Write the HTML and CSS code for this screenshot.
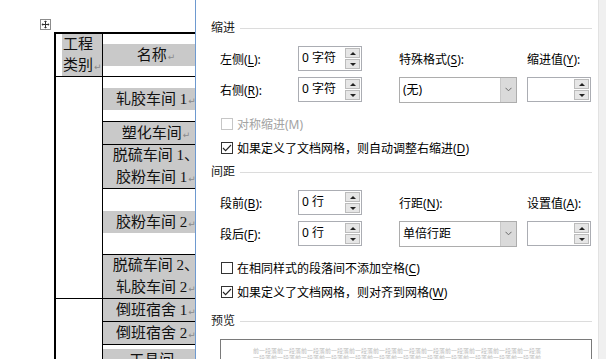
FILE: index.html
```html
<!DOCTYPE html>
<html lang="zh-CN">
<head>
    <meta charset="UTF-8">
    <meta name="viewport" content="width=device-width, initial-scale=1.0">
    <title>段落</title>
    <link rel="stylesheet" href="styles.css">
</head>
<body>
    <div class="doc">
        <div class="move-handle">
            <svg width="11" height="11" viewBox="0 0 11 11">
                <rect x="0.5" y="0.5" width="10" height="10" fill="#fff" stroke="#8c8c8c"/>
                <path d="M5.5 2.5v6M2.5 5.5h6" stroke="#333" stroke-width="1"/>
                <path d="M5.5 1.5l-1.6 1.6h3.2zM5.5 9.5l-1.6-1.6h3.2zM1.5 5.5l1.6-1.6v3.2zM9.5 5.5l-1.6-1.6v3.2z" fill="#333"/>
            </svg>
        </div>
        <div class="tbl">
            <div class="cell c1 head"><div class="shade left">工程<br>类别<span class="pm">↵</span></div></div>
            <div class="cell c2"><div class="shade">名称<span class="pm">↵</span></div></div>
            <div class="cell c1 span-a"></div>
            <div class="cell c2"><div class="shade">轧胶车间 1<span class="pm">↵</span></div></div>
            <div class="cell c2"><div class="shade">塑化车间<span class="pm">↵</span></div></div>
            <div class="cell c2"><div class="shade two">脱硫车间 1、<br>胶粉车间 1<span class="pm">↵</span></div></div>
            <div class="cell c2"><div class="shade">胶粉车间 2<span class="pm">↵</span></div></div>
            <div class="cell c2"><div class="shade two">脱硫车间 2、<br>轧胶车间 2<span class="pm">↵</span></div></div>
            <div class="cell c1 span-b"></div>
            <div class="cell c2"><div class="shade">倒班宿舍 1<span class="pm">↵</span></div></div>
            <div class="cell c2"><div class="shade">倒班宿舍 2<span class="pm">↵</span></div></div>
            <div class="cell c2"><div class="shade">工具间<span class="pm">↵</span></div></div>
        </div>
    </div>

    <div class="dialog">
        <div class="group-title">缩进</div>
        <div class="field-grid">
            <span class="lbl">左侧(<u>L</u>):</span>
            <div class="spin"><span class="spin-val">0 字符</span><span class="spin-btns"><i class="up"></i><i class="down"></i></span></div>
            <span class="lbl col-a">特殊格式(<u>S</u>):</span>
            <span class="lbl col-b">缩进值(<u>Y</u>):</span>

            <span class="lbl">右侧(<u>R</u>):</span>
            <div class="spin"><span class="spin-val">0 字符</span><span class="spin-btns"><i class="up"></i><i class="down"></i></span></div>
            <div class="combo col-a"><span class="combo-val">(无)</span><span class="combo-arrow"><svg width="7" height="5" viewBox="0 0 7 5"><path d="M0.5 0.8l3 3 3-3" fill="none" stroke="#6a6a6a"/></svg></span></div>
            <div class="spin col-b"><span class="spin-val"></span><span class="spin-btns"><i class="up"></i><i class="down"></i></span></div>
        </div>

        <div class="check disabled first">
            <span class="box"></span><span>对称缩进(M)</span>
        </div>
        <div class="check">
            <span class="box"><svg width="10" height="10" viewBox="0 0 10 10"><path d="M1 5l2.6 2.6L9 2" fill="none" stroke="#222" stroke-width="1.1"/></svg></span><span>如果定义了文档网格，则自动调整右缩进(<u>D</u>)</span>
        </div>

        <div class="group-title">间距</div>
        <div class="field-grid">
            <span class="lbl">段前(<u>B</u>):</span>
            <div class="spin"><span class="spin-val">0 行</span><span class="spin-btns"><i class="up"></i><i class="down"></i></span></div>
            <span class="lbl col-a">行距(<u>N</u>):</span>
            <span class="lbl col-b">设置值(<u>A</u>):</span>

            <span class="lbl">段后(<u>F</u>):</span>
            <div class="spin"><span class="spin-val">0 行</span><span class="spin-btns"><i class="up"></i><i class="down"></i></span></div>
            <div class="combo col-a"><span class="combo-val">单倍行距</span><span class="combo-arrow"><svg width="7" height="5" viewBox="0 0 7 5"><path d="M0.5 0.8l3 3 3-3" fill="none" stroke="#6a6a6a"/></svg></span></div>
            <div class="spin col-b"><span class="spin-val"></span><span class="spin-btns"><i class="up"></i><i class="down"></i></span></div>
        </div>

        <div class="check first">
            <span class="box"></span><span>在相同样式的段落间不添加空格(<u>C</u>)</span>
        </div>
        <div class="check">
            <span class="box"><svg width="10" height="10" viewBox="0 0 10 10"><path d="M1 5l2.6 2.6L9 2" fill="none" stroke="#222" stroke-width="1.1"/></svg></span><span>如果定义了文档网格，则对齐到网格(<u>W</u>)</span>
        </div>

        <div class="group-title preview-title">预览</div>
        <div class="preview">
            <div>前一段落前一段落前一段落前一段落前一段落前一段落前一段落前一段落前一段落前一段落前一段落前一段落</div>
            <div>一段落前一段落前一段落前一段落前一段落前一段落前一段落前一段落前一段落前一段落前一段落前一段落前</div>
        </div>
    </div>

    <div class="rail"></div>
</body>
</html>
```

FILE: styles.css
```css
html, body {
    margin: 0;
    padding: 0;
}
body {
    width: 606px;
    height: 359px;
    overflow: hidden;
    display: flex;
    background: #fff;
}

/* document side */
.doc {
    width: 195px;
    flex-shrink: 0;
    overflow: hidden;
    padding: 19px 0 0 40px;
    box-sizing: border-box;
}
.move-handle {
    width: 11px;
    height: 11px;
    line-height: 0;
}
.tbl {
    margin: 2px 0 0 14px;
    width: 155px;
    display: grid;
    grid-template-columns: 47px 106px;
    grid-template-rows: 43px 45px 23px 44px 66px 44px 23px 23px 30px;
    border-top: 2px solid #000;
    border-left: 2px solid #000;
    font-family: "Liberation Serif", "Noto Sans CJK SC", serif;
    font-size: 15px;
    color: #111;
}
.cell {
    border-bottom: 1px solid #000;
    display: flex;
    align-items: center;
    min-width: 0;
    overflow: hidden;
}
.c1 {
    grid-column: 1;
    border-right: 1px solid #000;
}
.c2 {
    grid-column: 2;
}
.head {
    padding-left: 6px;
    align-items: stretch;
}
.head .shade {
    line-height: 21px;
}
.span-a {
    grid-row: 2 / span 5;
}
.span-b {
    grid-row: 7 / span 3;
}
.shade {
    background: #c9c9c9;
    width: 100%;
    text-align: center;
    line-height: 22px;
    white-space: nowrap;
}
.shade.two {
    line-height: 21.5px;
}
.shade.left {
    text-align: left;
    padding-left: 1px;
}
.pm {
    font-family: "DejaVu Sans", sans-serif;
    font-size: 9px;
    line-height: 0;
    color: #8a8a8a;
    margin-left: 1px;
}

/* paragraph dialog */
.dialog {
    flex: 1;
    border-left: 1px solid #6e9ad0;
    padding: 20px 6px 0 15px;
    font-family: "Noto Sans", "Noto Sans CJK SC", sans-serif;
    font-size: 12px;
    color: #000;
    overflow: hidden;
}
.group-title {
    display: flex;
    align-items: center;
    gap: 5px;
    height: 16px;
    line-height: 16px;
    color: #1a1a1a;
}
.group-title::after {
    content: "";
    flex: 1;
    border-top: 1px solid #dcdcdc;
}
.group-title + .field-grid {
    margin-top: 10px;
}
.check + .group-title {
    margin-top: 8px;
}
.group-title.preview-title {
    margin-top: 13px;
}
.field-grid {
    margin-left: 9px;
    display: grid;
    grid-template-columns: 78px 64px 37px 118px 10px 64px;
    grid-template-rows: 25px 25px;
    row-gap: 6px;
    align-items: center;
}
.col-a {
    grid-column: 4;
}
.col-b {
    grid-column: 6;
}
.lbl u, .check u {
    text-decoration-thickness: 1px;
    text-underline-offset: 2px;
}
.spin {
    display: flex;
    height: 25px;
    box-sizing: border-box;
    border: 1px solid #abadb3;
    background: #fff;
}
.spin-val {
    flex: 1;
    padding-left: 3px;
    line-height: 22px;
}
.spin-btns {
    width: 15px;
    display: flex;
    flex-direction: column;
    gap: 1px;
    padding: 1px 1px 1px 0;
}
.spin-btns i {
    flex: 1;
    background: #e6e6e6;
    border: 1px solid #bcbcbc;
    display: flex;
    align-items: center;
    justify-content: center;
}
.spin-btns i::after {
    content: "";
    border-left: 3px solid transparent;
    border-right: 3px solid transparent;
}
.spin-btns .up::after {
    border-bottom: 3px solid #222;
}
.spin-btns .down::after {
    border-top: 3px solid #222;
}
.combo {
    display: flex;
    height: 26px;
    box-sizing: border-box;
    border: 1px solid #adadad;
    background: #fff;
}
.combo-val {
    flex: 1;
    padding-left: 3px;
    line-height: 23px;
}
.combo-arrow {
    width: 15px;
    background: #dadada;
    border-left: 1px solid #c8c8c8;
    display: flex;
    align-items: center;
    justify-content: center;
}
.check {
    display: flex;
    align-items: center;
    gap: 4px;
    height: 16px;
    margin: 8px 0 0 10px;
    white-space: nowrap;
}
.check.first {
    margin-top: 14px;
}
.box {
    width: 12px;
    height: 12px;
    box-sizing: border-box;
    border: 1px solid #333;
    background: #fff;
    display: flex;
    align-items: center;
    justify-content: center;
}
.disabled {
    color: #a3a3a3;
}
.disabled .box {
    border-color: #c6c6c6;
}
.preview {
    margin: 10px 0 0 9px;
    height: 60px;
    border: 1px solid #7a7a7a;
    padding: 8px 0 0 32px;
    font-size: 6px;
    line-height: 7px;
    color: #bdbdbd;
    white-space: nowrap;
    overflow: hidden;
}

.rail {
    width: 7px;
    flex-shrink: 0;
    background: #f0f0f0;
    border-left: 1px solid #e2e2e2;
}
```
